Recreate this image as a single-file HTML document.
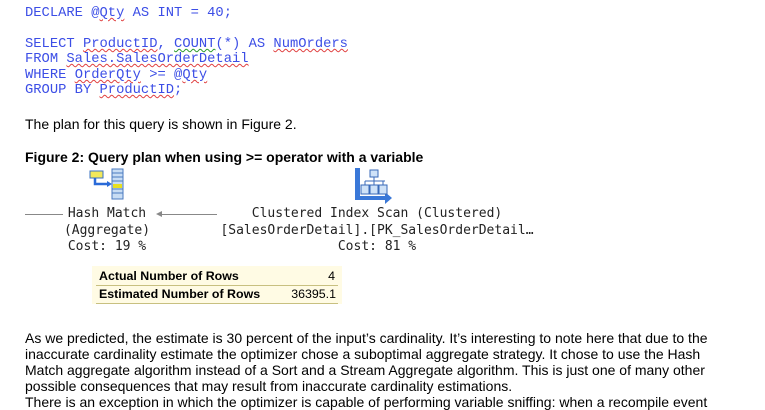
<!DOCTYPE html>
<html><head><style>
body{margin:0;width:765px;height:408px;background:#fff;position:relative;overflow:hidden}
.a{position:absolute;white-space:pre}
.c{font-family:"Liberation Mono",monospace;font-size:13.8px;color:#3c4ee6;}
.u{text-decoration:underline wavy #e04040;text-decoration-thickness:1px;text-underline-offset:1px}
.g{text-decoration-color:#2a9a2a}
.b{font-family:"Liberation Sans",sans-serif;font-size:14px;color:#000}
.m{font-family:"DejaVu Sans Mono",monospace;font-size:13px;color:#222;text-align:center}
.t{font-family:"Liberation Sans",sans-serif;font-size:12.4px;font-weight:bold;color:#000}
</style></head><body>
<div class="a c" style="left:25px;top:6px">DECLARE @<span class="u">Qty</span> AS INT = 40;</div>
<div class="a c" style="left:25px;top:37px">SELECT <span class="u">ProductID</span>, <span class="u g">COUNT</span>(*) AS <span class="u">NumOrders</span></div>
<div class="a c" style="left:25px;top:52px">FROM <span class="u">Sales.SalesOrderDetail</span></div>
<div class="a c" style="left:25px;top:68px">WHERE <span class="u">OrderQty</span> &gt;= @<span class="u">Qty</span></div>
<div class="a c" style="left:25px;top:83px">GROUP BY <span class="u">ProductID</span>;</div>
<div class="a b" style="left:25px;top:116px">The plan for this query is shown in Figure 2.</div>
<div class="a b" style="left:25px;top:149px;font-weight:bold">Figure 2: Query plan when using &gt;= operator with a variable</div>
<svg class="a" style="left:88px;top:168px" width="40" height="34">
<rect x="2" y="3" width="13" height="7" fill="#f2e85a" stroke="#3a70c0"/>
<path d="M7 10 V16 H20" stroke="#2a6ad8" stroke-width="2.5" fill="none"/><path d="M19 13 L24 16 L19 19Z" fill="#2a6ad8"/>
<rect x="24" y="1" width="11" height="30" fill="#c8ddf4" stroke="#4a7ac0"/>
<path d="M24 5H35M24 9H35M24 13H35M24 21H35M24 25H35" stroke="#4a7ac0"/><rect x="25" y="16" width="9" height="4" fill="#e8e020"/>
</svg>
<svg class="a" style="left:353px;top:166px" width="44" height="38">
<rect x="2" y="2" width="5" height="30" fill="#3a78d8"/>
<path d="M2 32H34" stroke="#3a78d8" stroke-width="4"/><path d="M32 26L39 32L32 38Z" fill="#3a78d8"/>
<rect x="17" y="4" width="8" height="7" fill="#cfe2f8" stroke="#3a6ab8"/>
<path d="M21 11V15M12 15H32M12 15V19M21 15V19M30 15V19" stroke="#3a6ab8"/>
<rect x="8" y="19" width="8" height="9" fill="#cfe2f8" stroke="#3a6ab8"/><rect x="17" y="19" width="8" height="9" fill="#cfe2f8" stroke="#3a6ab8"/><rect x="26" y="19" width="8" height="9" fill="#cfe2f8" stroke="#3a6ab8"/>
</svg>
<div class="a" style="left:25px;top:214px;width:38px;border-top:1px solid #888"></div>
<div class="a" style="left:162px;top:214px;width:55px;border-top:1px solid #888"></div>
<div class="a" style="left:156px;top:211px;width:0;height:0;border-top:3px solid transparent;border-bottom:3px solid transparent;border-right:6px solid #888"></div>
<div class="a m" style="left:47px;top:206px;width:120px;line-height:16.5px">Hash Match
(Aggregate)
Cost: 19 %</div>
<div class="a m" style="left:217px;top:206px;width:320px;line-height:16.5px">Clustered Index Scan (Clustered)
[SalesOrderDetail].[PK_SalesOrderDetail…
Cost: 81 %</div>
<div class="a" style="left:92px;top:266px;width:250px;height:38px;background:#fffbe4"></div>
<div class="a" style="left:96px;top:285px;width:242px;border-top:1px solid #c8c080"></div>
<div class="a" style="left:96px;top:303px;width:242px;border-top:1px solid #c8c080"></div>
<div class="a t" style="left:99px;top:269px">Actual Number of Rows</div>
<div class="a" style="left:300px;top:269px;width:35px;text-align:right;font-family:'Liberation Sans',sans-serif;font-size:12.4px">4</div>
<div class="a t" style="left:99px;top:287px">Estimated Number of Rows</div>
<div class="a" style="left:280px;top:287px;width:56px;text-align:right;font-family:'Liberation Sans',sans-serif;font-size:12.4px">36395.1</div>
<div class="a b" style="left:25px;top:330px;line-height:16px">As we predicted, the estimate is 30 percent of the input’s cardinality. It’s interesting to note here that due to the
inaccurate cardinality estimate the optimizer chose a suboptimal aggregate strategy. It chose to use the Hash
Match aggregate algorithm instead of a Sort and a Stream Aggregate algorithm. This is just one of many other
possible consequences that may result from inaccurate cardinality estimations.
There is an exception in which the optimizer is capable of performing variable sniffing: when a recompile event</div>
</body></html>
